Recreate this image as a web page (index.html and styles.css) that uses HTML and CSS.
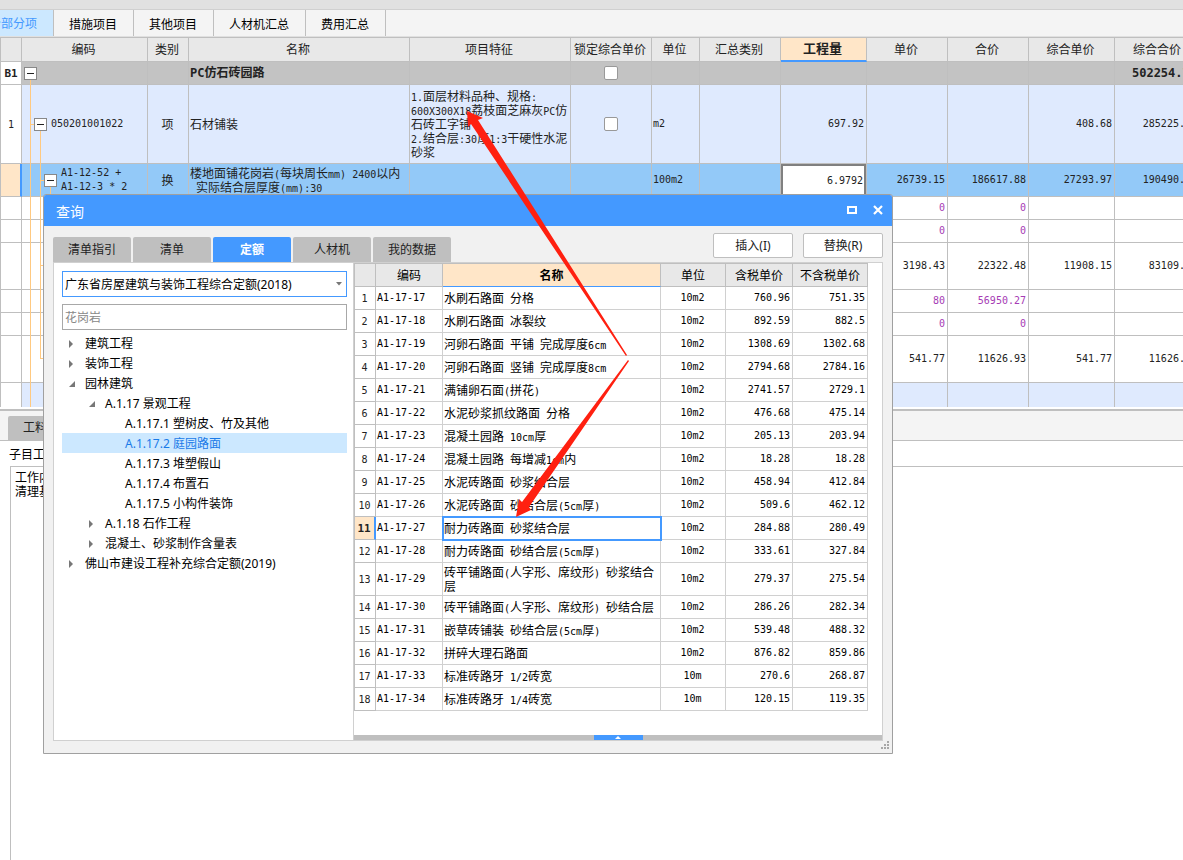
FILE: index.html
```html
<!DOCTYPE html>
<html lang="zh-CN">
<head>
<meta charset="utf-8">
<title>查询</title>
<link rel="stylesheet" href="styles.css">
</head>
<body>
<div class="app">
  <div class="strip"></div>
  <nav class="tabs">
    <button class="tab tab-on">分部分项</button>
    <button class="tab">措施项目</button>
    <button class="tab">其他项目</button>
    <button class="tab">人材机汇总</button>
    <button class="tab">费用汇总</button>
  </nav>

  <div class="sheet">
    <table class="grid">
      <colgroup>
        <col class="g-no"><col class="g-code"><col class="g-kind"><col class="g-name"><col class="g-feat"><col class="g-lock"><col class="g-unit"><col class="g-sum"><col class="g-qty"><col class="g-price"><col class="g-price"><col class="g-qty"><col class="g-total">
      </colgroup>
      <thead>
        <tr><th></th><th>编码</th><th>类别</th><th>名称</th><th>项目特征</th><th>锁定综合单价</th><th>单位</th><th>汇总类别</th><th class="head-on">工程量</th><th>单价</th><th>合价</th><th>综合单价</th><th>综合合价</th></tr>
      </thead>
      <tbody>
        <tr class="r-group">
          <td class="no">B1</td>
          <td class="code"><div class="node"><button class="fold" aria-label="折叠"></button></div></td>
          <td></td><td>PC仿石砖园路</td><td></td>
          <td class="mid"><input type="checkbox" class="check" aria-label="锁定综合单价"></td>
          <td></td><td></td><td></td><td></td><td></td><td></td><td class="num">502254.77</td>
        </tr>
        <tr class="r-item">
          <td class="no">1</td>
          <td class="code"><div class="node lv1"><button class="fold" aria-label="折叠"></button><span class="l">050201001022</span></div></td>
          <td class="mid">项</td><td>石材铺装</td>
          <td><span class="l">1.</span>面层材料品种、规格<span class="l">:</span><br><span class="l">600X300X18</span>荔枝面芝麻灰<span class="l">PC</span>仿<br>石砖工字铺<br><span class="l">2.</span>结合层<span class="l">:30</span>厚<span class="l">1:3</span>干硬性水泥<br>砂浆</td>
          <td class="mid"><input type="checkbox" class="check" aria-label="锁定综合单价"></td>
          <td class="l">m2</td><td></td><td class="num">697.92</td><td></td><td></td><td class="num">408.68</td><td class="num">285225.95</td>
        </tr>
        <tr class="r-pick">
          <td class="no"></td>
          <td class="code"><div class="node lv2"><button class="fold" aria-label="折叠"></button><span class="code-text">A1-12-52 +<br>A1-12-3 * 2</span></div></td>
          <td class="mid">换</td>
          <td>楼地面铺花岗岩<span class="l">(</span>每块周长<span class="l">mm) 2400</span>以内<br><span class="l">&nbsp;</span>实际结合层厚度<span class="l">(mm):30</span></td>
          <td></td><td></td><td class="l">100m2</td><td></td>
          <td class="edit"><input type="text" class="qty" value="6.9792" aria-label="工程量"></td>
          <td class="num">26739.15</td><td class="num">186617.88</td><td class="num">27293.97</td><td class="num">190490.08</td>
        </tr>
        <tr class="r-sub fee"><td></td><td></td><td></td><td></td><td></td><td></td><td></td><td></td><td></td><td class="num">0</td><td class="num">0</td><td></td><td></td></tr>
        <tr class="r-sub fee"><td></td><td></td><td></td><td></td><td></td><td></td><td></td><td></td><td></td><td class="num">0</td><td class="num">0</td><td></td><td></td></tr>
        <tr class="r-tall"><td></td><td></td><td></td><td></td><td></td><td></td><td></td><td></td><td></td><td class="num">3198.43</td><td class="num">22322.48</td><td class="num">11908.15</td><td class="num">83109.36</td></tr>
        <tr class="r-sub fee"><td></td><td></td><td></td><td></td><td></td><td></td><td></td><td></td><td></td><td class="num">80</td><td class="num">56950.27</td><td></td><td></td></tr>
        <tr class="r-sub fee"><td></td><td></td><td></td><td></td><td></td><td></td><td></td><td></td><td></td><td class="num">0</td><td class="num">0</td><td></td><td></td></tr>
        <tr class="r-tall"><td></td><td></td><td></td><td></td><td></td><td></td><td></td><td></td><td></td><td class="num">541.77</td><td class="num">11626.93</td><td class="num">541.77</td><td class="num">11626.38</td></tr>
        <tr class="r-last"><td></td><td></td><td></td><td></td><td></td><td></td><td></td><td></td><td></td><td></td><td></td><td></td><td></td></tr>
      </tbody>
    </table>
    <svg class="branches" width="60" height="370" viewBox="0 0 60 370" aria-hidden="true">
      <path d="M30.500 42V369M30.500 86.500H34M40.500 93V321M40.500 142.500H44M40.500 227.500H50M40.500 320.500H50M50.500 149V200" fill="none" stroke="#ffc980"/>
    </svg>
  </div>

  <div class="lower-bar"><button class="lower-tab">工料机显示</button></div>
  <div class="lower-title">子目工作内容</div>
  <div class="lower-box">工作内容<br>清理基层</div>
</div>

<section class="dialog" role="dialog" aria-label="查询">
  <header class="title">
    <h1>查询</h1>
    <div class="win">
      <button class="win-btn" aria-label="最大化"><svg width="10" height="8" viewBox="0 0 10 8"><rect x="1" y="1" width="8" height="6" fill="none" stroke="#fff" stroke-width="2"/></svg></button>
      <button class="win-btn" aria-label="关闭"><svg width="10" height="10" viewBox="0 0 10 10"><path d="M1 1L9 9M9 1L1 9" stroke="#fff" stroke-width="2.200"/></svg></button>
    </div>
  </header>
  <div class="body">
    <div class="tools">
      <div class="views">
        <button class="view">清单指引</button><button class="view">清单</button><button class="view view-on">定额</button><button class="view">人材机</button><button class="view">我的数据</button>
      </div>
      <div class="acts"><button class="act">插入(I)</button><button class="act">替换(R)</button></div>
    </div>
    <div class="panel">
      <aside class="side">
        <div class="pick">
          <select class="lib" aria-label="定额库"><option>广东省房屋建筑与装饰工程综合定额(2018)</option></select>
          <svg class="caret" width="6" height="4" viewBox="0 0 6 4" aria-hidden="true"><path d="M0 0H6L3 3.500Z" fill="#777"/></svg>
        </div>
        <input class="find" type="text" placeholder="花岗岩" aria-label="搜索">
        <ul class="tree">
          <li class="t0 shut">建筑工程</li>
          <li class="t0 shut">装饰工程</li>
          <li class="t0 open">园林建筑</li>
          <li class="t1 open">A.1.17 景观工程</li>
          <li class="t2">A.1.17.1 塑树皮、竹及其他</li>
          <li class="t2 t-on">A.1.17.2 庭园路面</li>
          <li class="t2">A.1.17.3 堆塑假山</li>
          <li class="t2">A.1.17.4 布置石</li>
          <li class="t2">A.1.17.5 小构件装饰</li>
          <li class="t1 shut">A.1.18 石作工程</li>
          <li class="t1 shut">混凝土、砂浆制作含量表</li>
          <li class="t0 shut">佛山市建设工程补充综合定额(2019)</li>
        </ul>
      </aside>
      <div class="main">
        <table class="list">
          <colgroup><col class="c-no"><col class="c-code"><col class="c-name"><col class="c-unit"><col class="c-tax"><col class="c-net"></colgroup>
          <thead><tr><th></th><th>编码</th><th class="head-on">名称</th><th>单位</th><th>含税单价</th><th>不含税单价</th></tr></thead>
          <tbody>
            <tr><td>1</td><td>A1-17-17</td><td>水刷石路面<span class="l"> </span>分格</td><td>10m2</td><td>760.96</td><td>751.35</td></tr>
            <tr><td>2</td><td>A1-17-18</td><td>水刷石路面<span class="l"> </span>冰裂纹</td><td>10m2</td><td>892.59</td><td>882.5</td></tr>
            <tr><td>3</td><td>A1-17-19</td><td>河卵石路面<span class="l"> </span>平铺<span class="l"> </span>完成厚度<span class="l">6cm</span></td><td>10m2</td><td>1308.69</td><td>1302.68</td></tr>
            <tr><td>4</td><td>A1-17-20</td><td>河卵石路面<span class="l"> </span>竖铺<span class="l"> </span>完成厚度<span class="l">8cm</span></td><td>10m2</td><td>2794.68</td><td>2784.16</td></tr>
            <tr><td>5</td><td>A1-17-21</td><td>满铺卵石面<span class="l">(</span>拼花<span class="l">)</span></td><td>10m2</td><td>2741.57</td><td>2729.1</td></tr>
            <tr><td>6</td><td>A1-17-22</td><td>水泥砂浆抓纹路面<span class="l"> </span>分格</td><td>10m2</td><td>476.68</td><td>475.14</td></tr>
            <tr><td>7</td><td>A1-17-23</td><td>混凝土园路<span class="l"> 10cm</span>厚</td><td>10m2</td><td>205.13</td><td>203.94</td></tr>
            <tr><td>8</td><td>A1-17-24</td><td>混凝土园路<span class="l"> </span>每增减<span class="l">1cm</span>内</td><td>10m2</td><td>18.28</td><td>18.28</td></tr>
            <tr><td>9</td><td>A1-17-25</td><td>水泥砖路面<span class="l"> </span>砂浆结合层</td><td>10m2</td><td>458.94</td><td>412.84</td></tr>
            <tr><td>10</td><td>A1-17-26</td><td>水泥砖路面<span class="l"> </span>砂结合层<span class="l">(5cm</span>厚<span class="l">)</span></td><td>10m2</td><td>509.6</td><td>462.12</td></tr>
            <tr class="now"><td>11</td><td>A1-17-27</td><td>耐力砖路面<span class="l"> </span>砂浆结合层</td><td>10m2</td><td>284.88</td><td>280.49</td></tr>
            <tr><td>12</td><td>A1-17-28</td><td>耐力砖路面<span class="l"> </span>砂结合层<span class="l">(5cm</span>厚<span class="l">)</span></td><td>10m2</td><td>333.61</td><td>327.84</td></tr>
            <tr class="two"><td>13</td><td>A1-17-29</td><td>砖平铺路面<span class="l">(</span>人字形、席纹形<span class="l">) </span>砂浆结合<br>层</td><td>10m2</td><td>279.37</td><td>275.54</td></tr>
            <tr><td>14</td><td>A1-17-30</td><td>砖平铺路面<span class="l">(</span>人字形、席纹形<span class="l">) </span>砂结合层</td><td>10m2</td><td>286.26</td><td>282.34</td></tr>
            <tr><td>15</td><td>A1-17-31</td><td>嵌草砖铺装<span class="l"> </span>砂结合层<span class="l">(5cm</span>厚<span class="l">)</span></td><td>10m2</td><td>539.48</td><td>488.32</td></tr>
            <tr><td>16</td><td>A1-17-32</td><td>拼碎大理石路面</td><td>10m2</td><td>876.82</td><td>859.86</td></tr>
            <tr><td>17</td><td>A1-17-33</td><td>标准砖路牙<span class="l"> 1/2</span>砖宽</td><td>10m</td><td>270.6</td><td>268.87</td></tr>
            <tr><td>18</td><td>A1-17-34</td><td>标准砖路牙<span class="l"> 1/4</span>砖宽</td><td>10m</td><td>120.15</td><td>119.35</td></tr>
          </tbody>
        </table>
        <div class="splitter"><button class="pull" aria-label="展开"><svg width="6" height="3" viewBox="0 0 6 3"><path d="M3 0L6 3H0Z" fill="#fff"/></svg></button></div>
      </div>
    </div>
    <svg class="grip" width="9" height="9" viewBox="0 0 9 9" aria-hidden="true"><path d="M7 0h2v2h-2zM4 3h2v2h-2zM7 3h2v2h-2zM1 6h2v2h-2zM4 6h2v2h-2zM7 6h2v2h-2z" fill="#a8a8a8"/></svg>
  </div>
</section>

<svg class="marks" width="660" height="540" viewBox="0 0 660 540" aria-hidden="true">
  <path d="M467 111L483 118L478 120L627 355L626 356L471 124L468 127Z" fill="#ff2010"/>
  <path d="M516 517L519 499L522 502L628 360L629 361L529 507L531 510Z" fill="#ff2010"/>
</svg>
</body>
</html>
```
FILE: styles.css
```css
* { box-sizing: border-box; }
body {
  margin: 0;
  height: 100vh;
  overflow: hidden;
  position: relative;
  background: #fff;
  color: #222;
  font: 12px/14px "Noto Sans", "Noto Sans CJK SC", sans-serif;
}
button, input, select { font: inherit; color: inherit; margin: 0; padding: 0; border: 0; border-radius: 0; }
.app { display: flex; flex-direction: column; height: 100%; }
.l, .num, .code-text { font-family: "DejaVu Sans Mono", monospace; font-size: 10px; }
span.l { white-space: pre; line-height: 8px; }

.strip { height: 10px; flex: none; background: #e1e1e1; border-bottom: 1px solid #d0d0d0; }
.tabs { display: flex; flex: none; height: 27px; margin-left: -27px; background: #f4f4f4; border-bottom: 1px solid #e0e0e0; }
.tab { padding: 4px 16px 0 15px; background: #f4f4f4; border-right: 1px solid #bfbfbf; color: #000; }
.tab-on { background: #cce8ff; color: #4499ff; padding: 2px 16px 0; }

/* bill sheet */
.sheet { position: relative; flex: none; overflow: hidden; border-top: 1px solid #bfbfbf; border-bottom: 2px solid #bfbfbf; padding-bottom: 2px; }
.grid, .list { table-layout: fixed; border-collapse: separate; border-spacing: 0; font-family: "Noto Sans CJK SC", sans-serif; }
.grid { width: 1202px; border-left: 1px solid #bfbfbf; }
.g-no { width: 21px; } .g-code { width: 126px; } .g-kind { width: 41px; } .g-name { width: 221px; }
.g-feat { width: 161px; } .g-lock { width: 81px; } .g-unit { width: 48px; } .g-sum { width: 81px; }
.g-qty { width: 86px; } .g-price { width: 81px; } .g-total { width: 87px; }
.grid th, .grid td { padding: 0 2px 1px 1px; border: solid #bfbfbf; border-width: 0 1px 1px 0; text-align: left; vertical-align: middle; white-space: nowrap; }
.grid th { height: 24px; padding: 0 2px 2px 0; background: #e8e8e8; font-weight: 400; text-align: center; }
.grid .head-on { background: #ffe6c8; border-bottom: 2px solid #4499ff; font-weight: 700; font-size: 13px; }
.grid .no { background: #fff; text-align: center; padding: 1px 0 0; font-family: "DejaVu Sans Mono", monospace; font-size: 10px; }
.grid .mid { text-align: center; }
.grid .num { text-align: right; padding-bottom: 0; }
.grid .num:last-child { padding-right: 4px; }
.grid .code { padding: 0; }
.r-group td { height: 23px; background: #c3c3c3; font-weight: 700; font-family: "DejaVu Sans Mono", "Noto Sans CJK SC", sans-serif; }
.r-group .num { font-size: 12px; }
.grid .r-group .no { font-size: 11px; }
.r-item td, .r-last td { background: #dfeafe; }
.r-item td { height: 79px; }
.r-pick td { height: 33px; background: #93c9f8; }
.grid .r-pick .no { background: #ffe6c8; border-right: 2px solid #4499ff; }
.r-sub td { height: 23px; }
.r-tall td { height: 47px; }
.grid .r-last td { height: 24px; border-bottom: 0; }
.grid .r-last td:first-child { background: #fff; }
.fee { color: #a63cb5; }
.node { display: flex; align-items: center; gap: 4px; padding-left: 2px; }
.lv1 { padding-left: 12px; }
.lv2 { padding-left: 22px; }
.fold { position: relative; z-index: 1; flex: none; width: 13px; height: 13px; background: linear-gradient(#222, #222) center / 7px 1px no-repeat #fff; border: 1px solid #888; }
.check { appearance: none; display: block; width: 14px; height: 14px; margin: 0 auto; background: #fff; border: 1px solid #999; border-radius: 2px; }
.grid .edit { padding: 0; }
.qty { display: block; width: 100%; height: 32px; padding: 0 1px; border: 2px solid #808080; background: #fff; text-align: right; font-family: "DejaVu Sans Mono", monospace; font-size: 10px; }
.branches { position: absolute; left: 0; top: 0; }

/* lower area */
.lower-bar { display: flex; align-items: flex-end; flex: none; height: 30px; padding-left: 8px; background: #f4f4f4; border-bottom: 1px solid #bfbfbf; }
.lower-tab { height: 24px; padding: 0 15px; background: #bfbfbf; border-radius: 2px 2px 0 0; }
.lower-title { flex: none; padding: 7px 9px 4px; color: #000; }
.lower-box { flex: 1; margin-left: 10px; padding: 4px; border: solid #bfbfbf; border-width: 1px 0 0 1px; color: #000; }

/* query window */
.dialog { position: absolute; left: 43px; top: 194px; width: 850px; height: 560px; display: flex; flex-direction: column; background: #f1f1f1; border: 1px solid #a0a0a0; border-radius: 3px 3px 0 0; color: #222; }
.title { display: flex; justify-content: space-between; align-items: center; height: 31px; padding: 0 6px 1px 12px; background: #4499ff; color: #fff; border-radius: 2px 2px 0 0; }
.title h1 { margin: 4px 0 0; font-size: 14px; font-weight: 400; }
.win { display: flex; gap: 10px; }
.win-btn { display: grid; place-items: center; width: 16px; height: 16px; background: none; }
.body { flex: 1; position: relative; display: flex; flex-direction: column; padding: 7px 9px 12px; }
.tools { display: flex; justify-content: space-between; height: 29px; }
.views { display: flex; align-items: flex-end; gap: 2px; }
.view { width: 78px; height: 25px; padding-top: 1px; background: #bfbfbf; border-radius: 2px 2px 0 0; }
.view-on { background: #4499ff; color: #fff; font-weight: 700; }
.acts { display: flex; gap: 10px; }
.act { width: 80px; height: 25px; padding-top: 1px; background: #fff; border: 1px solid #bfbfbf; border-radius: 2px; }
.panel { flex: 1; display: flex; background: #fff; border: 1px solid #d0d0d0; }
.side { flex: 0 0 300px; padding: 8px 6px 0 8px; border-right: 1px solid #d0d0d0; color: #000; }
.pick { position: relative; }
.lib { appearance: none; display: block; width: 100%; height: 26px; padding: 2px 0 0 2px; background: #fff; border: 1px solid #4499ff; }
.caret { position: absolute; right: 5px; top: 11px; }
.find { display: block; width: 100%; height: 26px; margin: 7px 0 3px; padding: 1px 2px 0; border: 1px solid #a8a8a8; }
.find::placeholder { color: #888; opacity: 1; }
.tree { list-style: none; margin: 0; padding: 0; }
.tree li { display: flex; align-items: center; height: 20px; padding-top: 2px; white-space: nowrap; }
.tree li::before { content: ""; flex: none; width: 7px; height: 8px; margin-right: 9px; background: #777; clip-path: polygon(0 100%, 0 100%, 0 100%); }
.tree .shut::before { clip-path: polygon(0 0, 4px 50%, 0 100%); }
.tree .open::before { clip-path: polygon(6px 1px, 6px 7px, 0 7px); }
.t0 { padding-left: 7px; }
.t1 { padding-left: 27px; }
.t2 { padding-left: 47px; }
.t-on { background: #cce8ff; color: #1a7ae8; }
.main { flex: 1; display: flex; flex-direction: column; justify-content: space-between; }
.list { width: 514px; border-left: 1px solid #bfbfbf; border-top: 1px solid #bfbfbf; color: #000; }
.c-no { width: 21px; } .c-code { width: 67px; } .c-name { width: 218px; } .c-unit { width: 65px; } .c-tax { width: 67px; } .c-net { width: 75px; }
.list th, .list td { height: 23px; padding: 0 2px 0 1px; border: solid #d0d0d0; border-width: 0 1px 1px 0; text-align: right; white-space: nowrap; }
.list th { background: #e8e8e8; border-color: #bfbfbf; font-weight: 400; text-align: center; padding: 0; }
.list .head-on { background: #ffe6c8; border-bottom-color: #4499ff; font-weight: 700; }
.list td { font-family: "DejaVu Sans Mono", monospace; font-size: 10px; }
.list td:first-child { text-align: center; border-color: #bfbfbf; color: #222; padding: 1px 1px 0 0; }
.list td:nth-child(2) { text-align: left; }
.list td:nth-child(3) { text-align: left; font-family: "Noto Sans CJK SC", sans-serif; font-size: 12px; }
.list td:nth-child(4) { text-align: center; }
.list .two td { height: 33px; }
.list .now td:first-child { background: #ffe6c8; font-weight: 700; font-size: 11px; border-right: 2px solid #4499ff; }
.list .now td:nth-child(3) { outline: 2px solid #4499ff; outline-offset: -1px; }
.splitter { display: flex; justify-content: center; height: 5px; background: #bfbfbf; }
.pull { display: grid; place-items: center; width: 49px; height: 5px; background: #4499ff; }
.grip { position: absolute; right: 3px; bottom: 3px; }

.marks { position: absolute; left: 0; top: 0; pointer-events: none; }
```
